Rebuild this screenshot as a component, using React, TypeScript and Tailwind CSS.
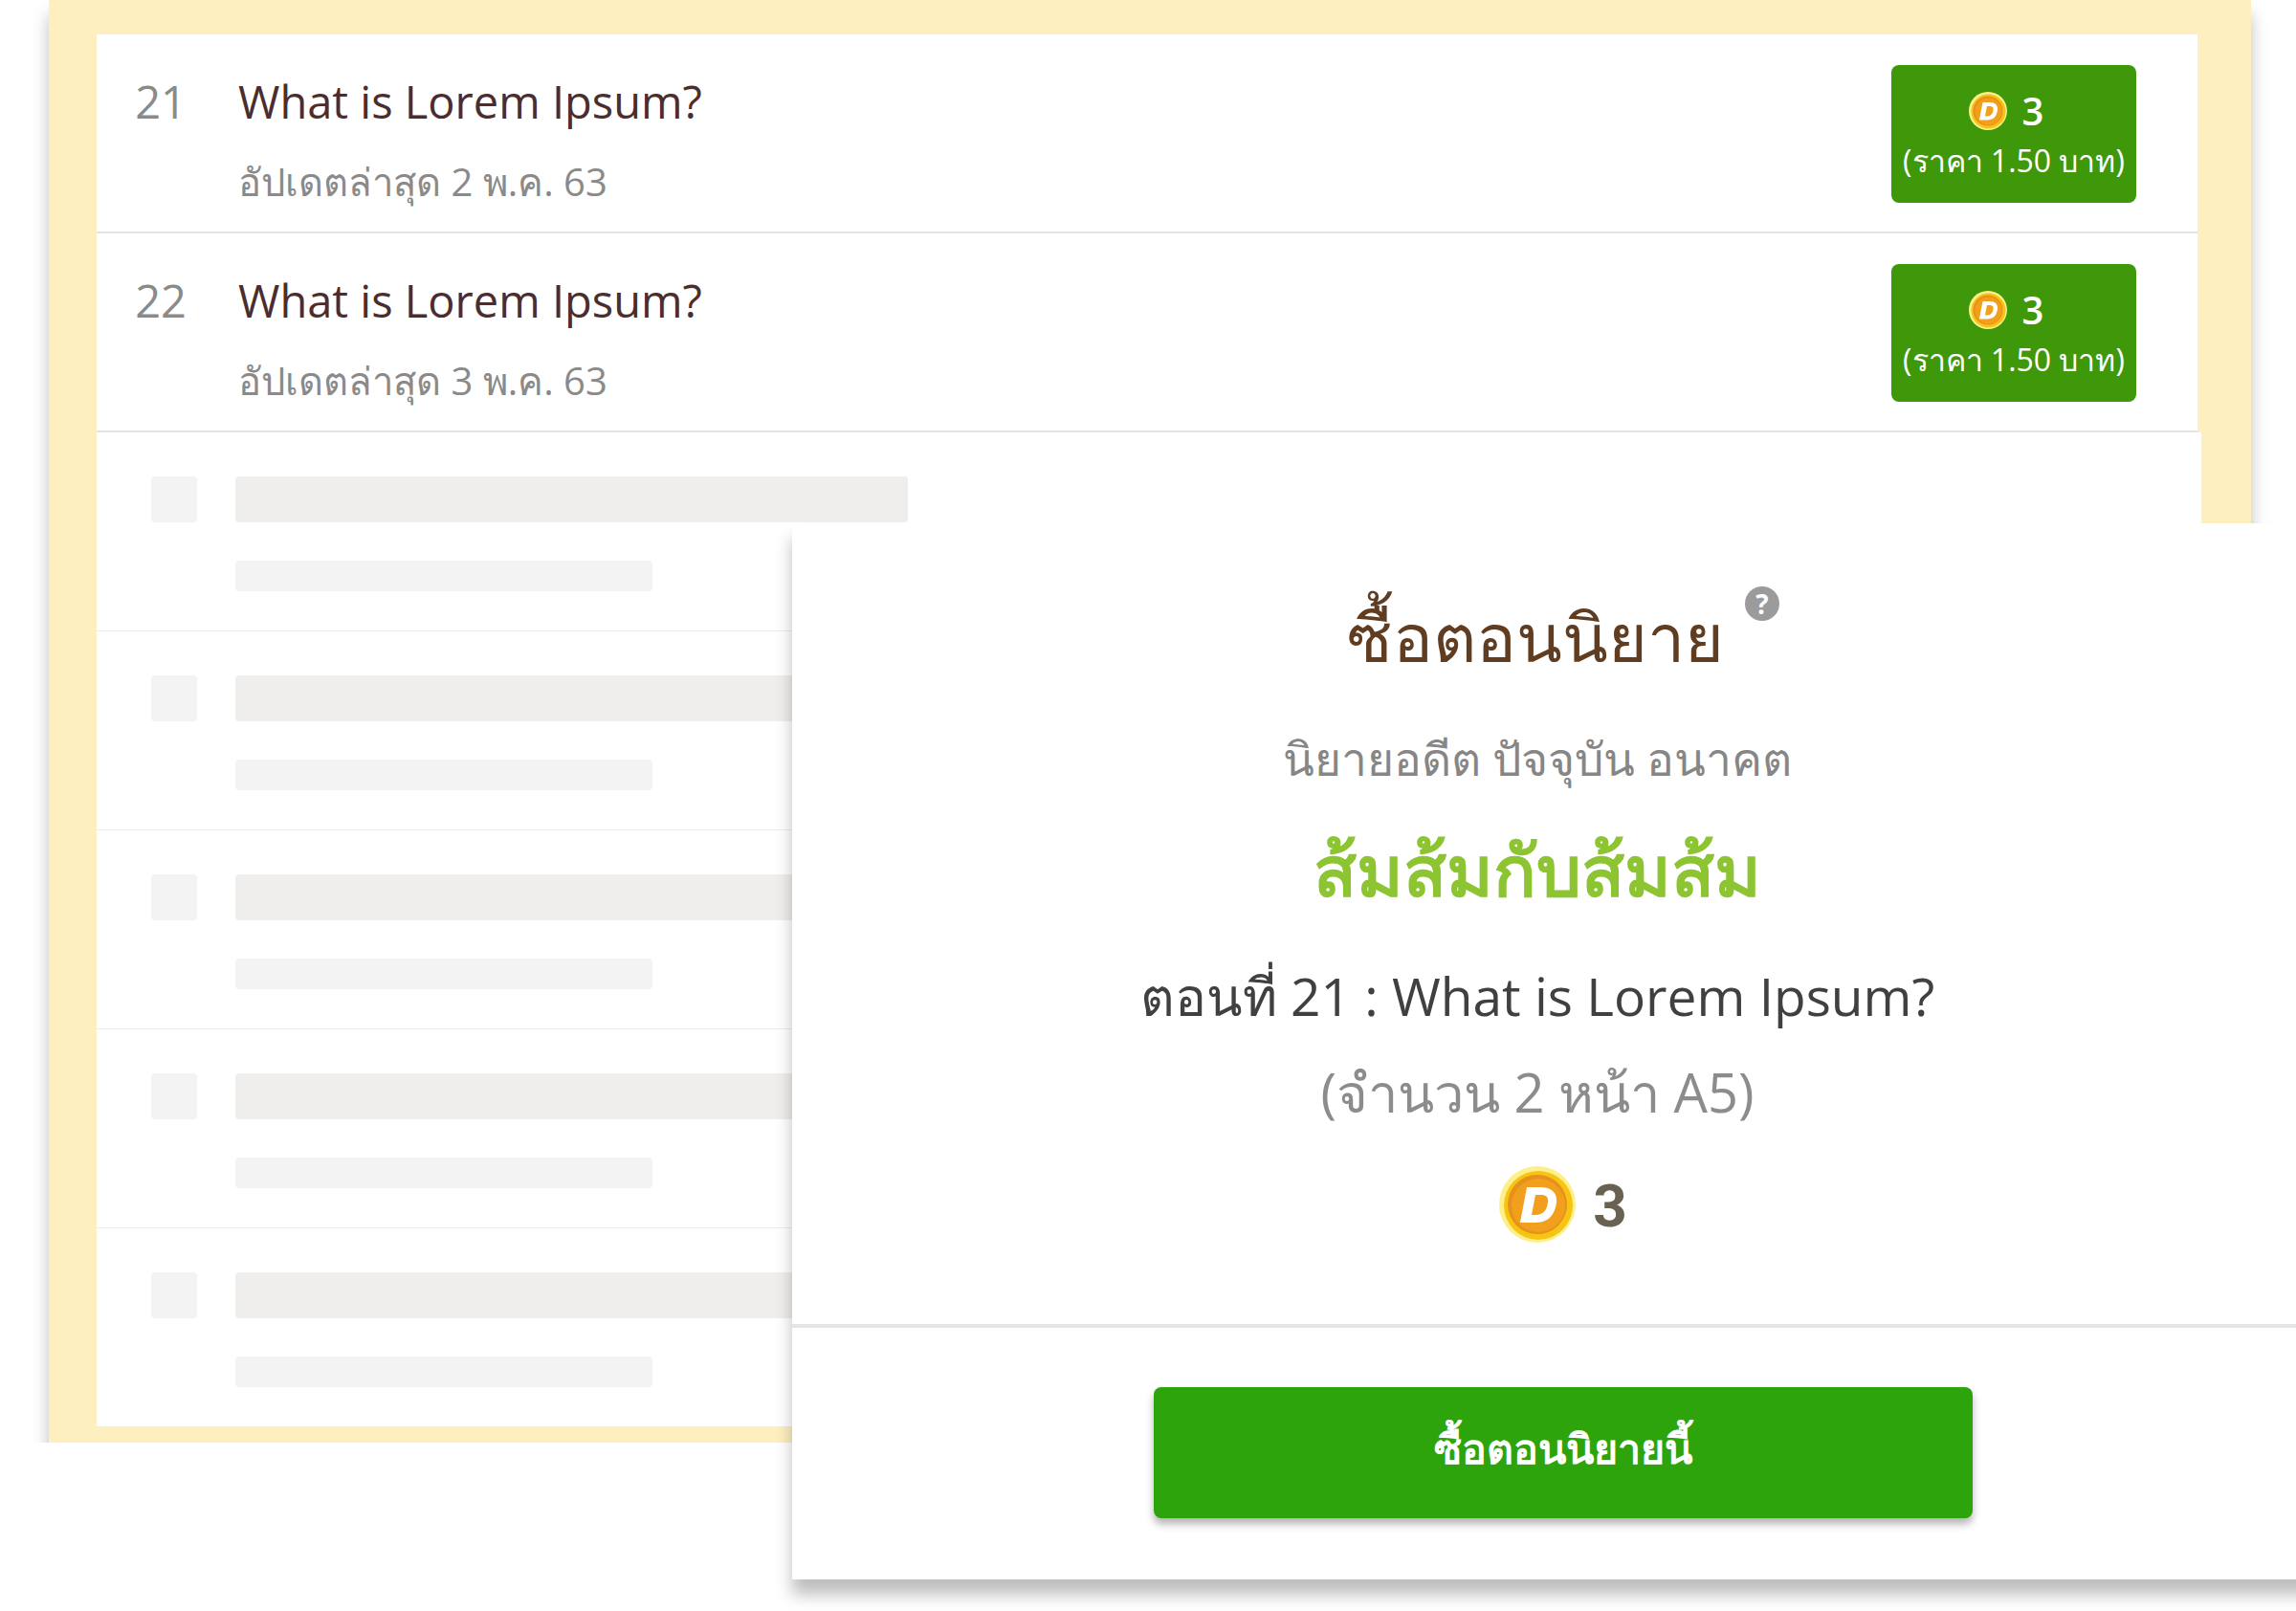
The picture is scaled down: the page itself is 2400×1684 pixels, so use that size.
import React from "react";

interface IEpisode {
  id: number;
  title: string;
  updated: string;
  coins: number;
  price: string;
}

const EPISODES: IEpisode[] = [
  { id: 21, title: "What is Lorem Ipsum?", updated: "อัปเดตล่าสุด 2 พ.ค. 63", coins: 3, price: "(ราคา 1.50 บาท)" },
  { id: 22, title: "What is Lorem Ipsum?", updated: "อัปเดตล่าสุด 3 พ.ค. 63", coins: 3, price: "(ราคา 1.50 บาท)" },
];

const PLACEHOLDERS = [23, 24, 25, 26, 27];

const Coin: React.FC<{ className: string }> = ({ className }) => (
  <svg viewBox="0 0 80 80" className={className} aria-hidden="true">
    <circle cx="40" cy="40" r="40" fill="#fdf08c" />
    <circle cx="41" cy="41" r="36" fill="#f6c413" />
    <circle cx="40" cy="40" r="31" fill="#e6911b" />
    <circle cx="41" cy="41" r="28" fill="#f29f1e" />
    <path
      fill="#fff"
      fillRule="evenodd"
      d="M29 22H43C56 22 61 29 60 38C58 52 51 59 38 59H22ZM38 30L34 51H38C46 51 50 46 51 38C52 32 49 30 43 30Z"
    />
  </svg>
);

const EpisodeRow: React.FC<{ episode: IEpisode }> = ({ episode }) => (
  <li className="mr-1 flex h-52 border-b-2 border-[#e3e3e3] bg-white">
    <span className="w-[134px] pt-[38px] text-center text-[47px] leading-16 text-[#8a8a8a]">{episode.id}</span>
    <div className="min-w-0 flex-1 pl-[14px]">
      <h2 className="pt-[38px] text-[47px] leading-16 text-[#4b2d2f]">{episode.title}</h2>
      <p className="pt-6 text-[40px] leading-14 text-[#8a8a8a]">{episode.updated}</p>
    </div>
    <button className="mt-8 mr-16 flex h-36 w-64 flex-col items-center rounded-lg bg-[#3f970a] pt-6 text-white">
      <span className="flex items-center gap-4 pr-4">
        <Coin className="size-10" />
        <span className="text-[40px] leading-12 font-semibold">{episode.coins}</span>
      </span>
      <span className="text-[32px] leading-14 whitespace-nowrap">{episode.price}</span>
    </button>
  </li>
);

const PlaceholderRow: React.FC = () => (
  <li className="flex h-52 gap-10 border-b border-[#ececec] bg-white pt-[46px] pl-[57px]">
    <div className="size-12 rounded-sm bg-[#f3f3f3]" />
    <div className="flex-1">
      <div className="h-12 w-[703px] rounded-sm bg-[#efeeec]" />
      <div className="mt-10 h-8 w-[436px] rounded-sm bg-[#f3f3f3]" />
    </div>
  </li>
);

const BuyDialog: React.FC = () => (
  <div
    role="dialog"
    aria-labelledby="buy-title"
    className="absolute top-[547px] -right-10 left-[34.5%] bg-white shadow-[0_16px_16px_rgba(0,0,0,0.26)]"
  >
    <div className="flex flex-col items-center border-b-4 border-[#e5e5e5] pt-[66px] pb-[85px]">
      <div className="flex items-start gap-[22px]">
        <h1 id="buy-title" className="pt-1 text-[70px] leading-24 text-[#603c21]">
          ซื้อตอนนิยาย
        </h1>
        <button
          aria-label="ช่วยเหลือ"
          className="flex size-9 items-center justify-center rounded-full bg-[#9b9b9b] text-[28px] leading-9 font-bold text-white"
        >
          ?
        </button>
      </div>
      <div className="pr-[54px] text-center">
        <p className="pt-12 text-5xl leading-16 text-[#868686]">นิยายอดีต ปัจจุบัน อนาคต</p>
        <p className="pt-9 text-[74px] leading-24 font-bold text-[#8dc432]">ส้มส้มกับส้มส้ม</p>
        <p className="pt-9 text-[55px] leading-24 text-[#404040]">ตอนที่ 21 : What is Lorem Ipsum?</p>
        <p className="pt-1 text-[56px] leading-24 text-[#8c8c8c]">(จำนวน 2 หน้า A5)</p>
      </div>
      <div className="flex items-center gap-[18px] pt-[30px]">
        <Coin className="size-20" />
        <span className="pt-1 font-['Roboto',sans-serif] text-[62px] leading-19 font-bold text-[#696253]">3</span>
      </div>
    </div>
    <div className="flex justify-center pt-[62px] pb-16">
      <button className="h-[137px] w-[856px] rounded-lg bg-[#2ea40c] pb-2 text-[43px] font-bold text-white shadow-[0_6px_8px_rgba(0,0,0,0.3)]">
        ซื้อตอนนิยายนี้
      </button>
    </div>
  </div>
);

export default function App() {
  return (
    <main className="relative min-h-[1684px] overflow-hidden bg-white font-['Open_Sans','Noto_Sans',sans-serif]">
      <div className="overflow-hidden pr-[47px] pl-[51px]">
        <div className="bg-[#fdefbf] pt-9 pr-13 pb-4 pl-[50px] shadow-[0_16px_16px_rgba(0,0,0,0.26)]">
          <ul>
            {EPISODES.map((episode) => (
              <EpisodeRow key={episode.id} episode={episode} />
            ))}
            {PLACEHOLDERS.map((id) => (
              <PlaceholderRow key={id} />
            ))}
          </ul>
        </div>
      </div>
      <BuyDialog />
    </main>
  );
}
